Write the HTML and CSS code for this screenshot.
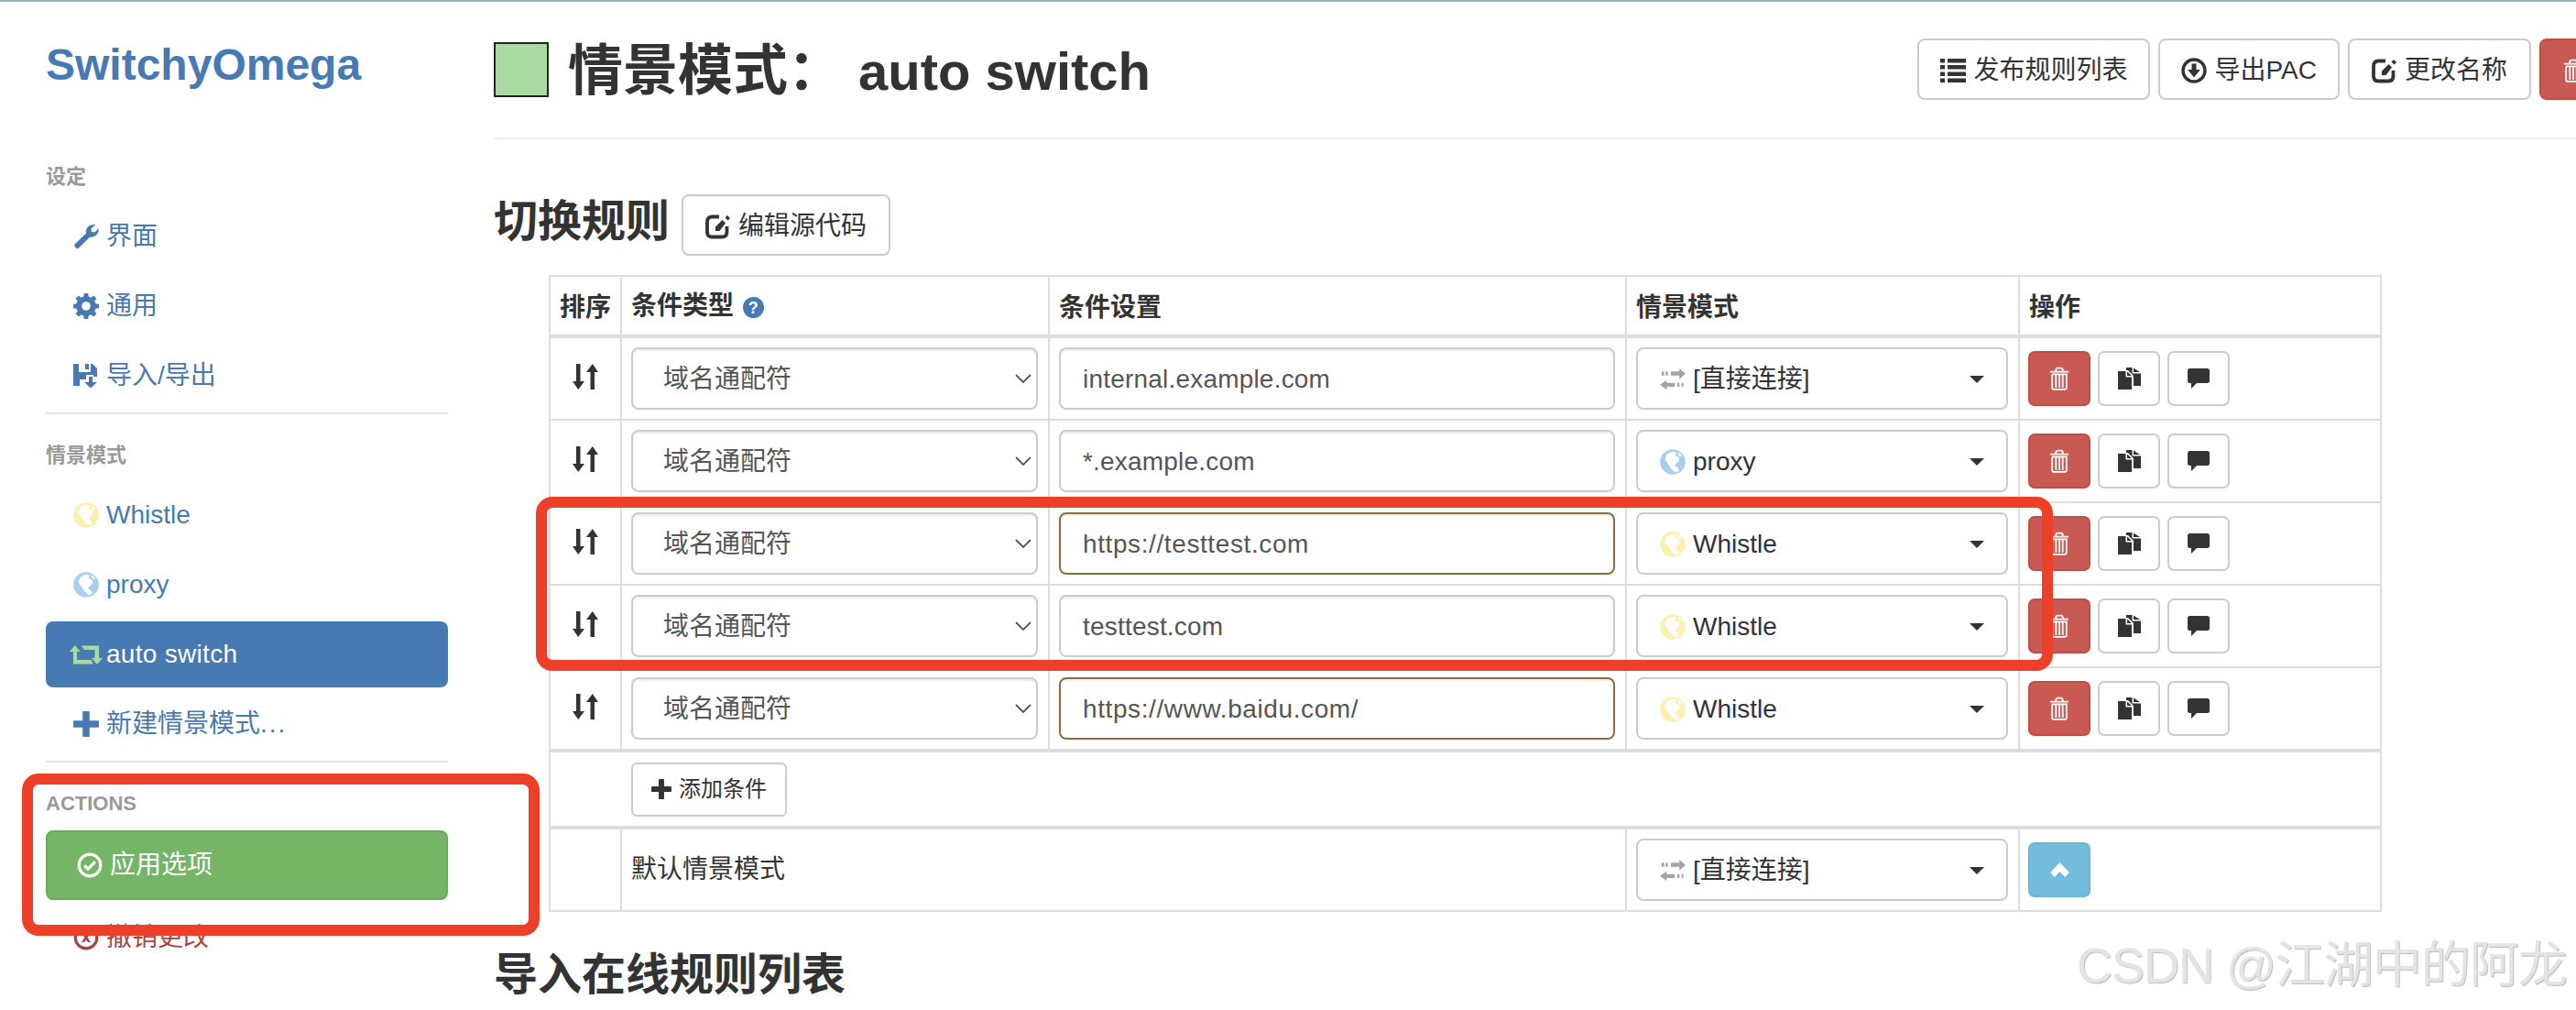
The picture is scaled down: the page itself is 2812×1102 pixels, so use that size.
FILE: index.html
```html
<!DOCTYPE html>
<html lang="zh-CN">
<head>
<meta charset="utf-8">
<title>SwitchyOmega</title>
<link rel="stylesheet" href="styles.css">
</head>
<body>
<svg class="sprite" aria-hidden="true">
  <symbol id="i-wrench" viewBox="0 0 28 28"><path d="M1.5 22.5 14 10.5C13 6 16 1.8 21 1.2L24.5 1 19.5 5.5 20 9l3.5.6L27.6 5C28.2 10.5 24.5 15 18 14.800L6 26.600Q4.500 27.800 3 26.400L1.600 25Q.6 23.600 1.500 22.500Z"/></symbol>
  <symbol id="i-cog" viewBox="0 0 28 28">
    <circle cx="14" cy="14" r="7.800" fill="none" stroke="currentColor" stroke-width="6"/>
    <g><rect x="11.500" y="0" width="5" height="28" rx="1"/><rect x="11.500" y="0" width="5" height="28" rx="1" transform="rotate(45 14 14)"/><rect x="11.500" y="0" width="5" height="28" rx="1" transform="rotate(90 14 14)"/><rect x="11.500" y="0" width="5" height="28" rx="1" transform="rotate(135 14 14)"/></g>
    <circle cx="14" cy="14" r="4.800" fill="#fff"/>
  </symbol>
  <symbol id="i-floppy" viewBox="0 0 28 28"><path d="M0 1H6V10H19V1H21L26 6V15H22V13H14V18H7V25H0Z"/><path d="M13 1H17V7H13Z"/><path d="M17 15H21V21H26L19 27.500 12 21H17Z"/></symbol>
  <symbol id="i-globe" viewBox="0 0 28 28"><circle cx="14" cy="14" r="13.800"/><path fill="#fff" d="M7 6.500C9.500 3.500 14 2 18 3.500L16.500 7 21 9 21 13 18 15.500 16 18 19 20 21 23.500 17 25.500 12 21 8.500 16 5.500 11.500Z"/><path fill="#fff" opacity=".8" d="M20.500 3 24.500 7 22 8.500 19.500 6Z"/></symbol>
  <symbol id="i-retweet" viewBox="0 0 36 21"><path d="M5.800 0 11.500 7H8V16H23L26 20.500H4V7H0Z"/><path d="M30 21 24 14H27.500V5H16L13 .5H32V14H36Z"/></symbol>
  <symbol id="i-plus" viewBox="0 0 26 26"><path d="M9.500 1Q9.500 0 10.500 0H15.500Q16.500 0 16.500 1V9.500H25Q26 9.500 26 10.500V15.500Q26 16.500 25 16.500H16.500V25Q16.500 26 15.500 26H10.500Q9.500 26 9.500 25V16.500H1Q0 16.500 0 15.500V10.500Q0 9.500 1 9.500H9.500Z"/></symbol>
  <symbol id="i-ok" viewBox="0 0 28 28"><circle cx="14" cy="14" r="11.800" fill="none" stroke="currentColor" stroke-width="3.200"/><path d="M12 20.500 7 15.500l2.400-2.400 2.600 2.600 6.600-6.600 2.400 2.400Z"/></symbol>
  <symbol id="i-undo" viewBox="0 0 28 28"><circle cx="14" cy="14" r="11.800" fill="none" stroke="currentColor" stroke-width="3.200"/><path d="M9 9h3l2 2.600L16 9h3l-3.400 5L19 19h-3l-2-2.600L12 19H9l3.400-5Z"/></symbol>
  <symbol id="i-list" viewBox="0 0 28 26"><path d="M0 0h5v4.500H0ZM8 0h20v4.500H8ZM0 7h5v4.500H0ZM8 7h20v4.500H8ZM0 14.500h5V19H0ZM8 14.500h20V19H8ZM0 21.500h5V26H0ZM8 21.500h20V26H8Z"/></symbol>
  <symbol id="i-download" viewBox="0 0 28 28"><circle cx="14" cy="14" r="12" fill="none" stroke="currentColor" stroke-width="3.400"/><path d="M11.500 6.500h5V13H21l-7 8.500L7 13h4.500Z"/></symbol>
  <symbol id="i-edit" viewBox="0 0 28 28"><path fill="none" stroke="currentColor" stroke-width="3.800" d="M15 3.500H7.500Q2 3.500 2 9V20Q2 25.500 7.500 25.500H18Q23.500 25.500 23.500 20V14"/><path d="M11 19V14.500L18.500 7 22 10.500 15.500 19ZM24 2l3 3-2.500 2.500-3-3Z"/></symbol>
  <symbol id="i-trash" viewBox="0 0 24 28"><path fill="none" stroke="currentColor" stroke-width="2" d="M1 6H23M8 6V3.500Q8 1.500 10 1.500H14Q16 1.500 16 3.500V6M3.500 9V25Q3.500 27 5.500 27H18.500Q20.500 27 20.500 25V9H3.500M8 10V25M12 10V25M16 10V25"/></symbol>
  <symbol id="i-sort" viewBox="0 0 28 28"><path d="M4 0H8.500V19H13L6.200 28 0 19H4Z"/><path d="M19.500 28H24V9H28L21.800 0 15 9H19.500Z"/></symbol>
  <symbol id="i-transfer" viewBox="0 0 28 24"><path d="M12 3.300H21.300V0L28 5.700 21.300 11.700V7.700H12ZM6.300 3.300H8.700V7.700H6.300ZM2 3.300H4.600V7.700H2Z"/><path d="M16.300 15.700H7.300V12.700L0 17.700 7.300 23.300V20H16.300ZM19 15.700H21.300V20H19ZM23.700 15.700H25.700V20H23.700Z"/></symbol>
  <symbol id="i-copy" viewBox="0 0 25 24"><path d="M0 4H8.500V10.500H15V24H0Z"/><path d="M10 4.500 15 9H10Z"/><path d="M9 0H15.500V6.500H25V20H17V9L11 3H9Z"/><path d="M17 .5 24 5H17Z"/></symbol>
  <symbol id="i-comment" viewBox="0 0 24 22"><path d="M2.500 0H21.500Q24 0 24 2.500V13.500Q24 16 21.500 16H10L4 22V16H2.500Q0 16 0 13.500V2.500Q0 0 2.500 0Z"/></symbol>
  <symbol id="i-chevron" viewBox="0 0 21 16"><path d="M10.500 0 21 11 16 16 10.500 10 5 16 0 11Z"/></symbol>
  <symbol id="i-select" viewBox="0 0 18 10"><path fill="none" stroke="currentColor" stroke-width="1.800" d="M1 1 9 9 17 1"/></symbol>
</svg>

<div class="page">
  <aside class="sidebar">
    <h1 class="logo">SwitchyOmega</h1>
    <h2 class="nav-head">设定</h2>
    <ul class="nav">
      <li><a class="pill"><svg class="ico"><use href="#i-wrench"/></svg>界面</a></li>
      <li><a class="pill"><svg class="ico"><use href="#i-cog"/></svg>通用</a></li>
      <li><a class="pill"><svg class="ico"><use href="#i-floppy"/></svg>导入/导出</a></li>
    </ul>
    <hr class="nav-rule">
    <h2 class="nav-head">情景模式</h2>
    <ul class="nav">
      <li><a class="pill"><svg class="ico whistle"><use href="#i-globe"/></svg>Whistle</a></li>
      <li><a class="pill"><svg class="ico proxy"><use href="#i-globe"/></svg>proxy</a></li>
      <li><a class="pill active"><svg class="ico wide"><use href="#i-retweet"/></svg><span class="active-name">auto switch</span></a></li>
      <li><a class="pill"><svg class="ico"><use href="#i-plus"/></svg><span>新建情景模式<span class="dots">...</span></span></a></li>
    </ul>
    <hr class="nav-rule">
    <h2 class="nav-head actions-head">ACTIONS</h2>
    <a class="apply"><svg class="ico"><use href="#i-ok"/></svg>应用选项</a>
    <a class="pill discard"><svg class="ico"><use href="#i-undo"/></svg>撤销更改</a>
  </aside>

  <main class="main">
    <header class="page-head">
      <div class="title-wrap">
        <span class="swatch"></span>
        <h1 class="title">情景模式：<span class="title-name">auto switch</span></h1>
      </div>
      <div class="head-actions">
        <button class="btn tight"><svg class="ico"><use href="#i-list"/></svg>发布规则列表</button>
        <button class="btn tight"><svg class="ico"><use href="#i-download"/></svg>导出PAC</button>
        <button class="btn"><svg class="ico"><use href="#i-edit"/></svg>更改名称</button>
        <button class="btn danger" aria-label="删除"><svg class="ico trash"><use href="#i-trash"/></svg></button>
      </div>
    </header>

    <div class="section-head">
      <h2 class="section-title">切换规则</h2>
      <button class="btn"><svg class="ico"><use href="#i-edit"/></svg>编辑源代码</button>
    </div>

    <table class="rules">
      <colgroup><col class="c-sort"><col class="c-type"><col class="c-cond"><col class="c-prof"><col class="c-act"></colgroup>
      <thead>
        <tr>
          <th class="th-sort">排序</th>
          <th class="th-type">条件类型 <span class="help">?</span></th>
          <th>条件设置</th>
          <th>情景模式</th>
          <th>操作</th>
        </tr>
      </thead>
      <tbody>
        <tr class="rule edge">
          <td class="sort"><svg class="ico"><use href="#i-sort"/></svg></td>
          <td><div class="select-wrap"><select class="field type"><option>域名通配符</option></select><svg class="sel-arrow"><use href="#i-select"/></svg></div></td>
          <td><input class="field text" value="internal.example.com"></td>
          <td><button class="field prof"><svg class="ico direct"><use href="#i-transfer"/></svg>[直接连接]<span class="caret"></span></button></td>
          <td class="acts"><button class="sq danger"><svg class="ico trash"><use href="#i-trash"/></svg></button><button class="sq"><svg class="ico copy"><use href="#i-copy"/></svg></button><button class="sq"><svg class="ico cmt"><use href="#i-comment"/></svg></button></td>
        </tr>
        <tr class="rule">
          <td class="sort"><svg class="ico"><use href="#i-sort"/></svg></td>
          <td><div class="select-wrap"><select class="field type"><option>域名通配符</option></select><svg class="sel-arrow"><use href="#i-select"/></svg></div></td>
          <td><input class="field text" value="*.example.com"></td>
          <td><button class="field prof"><svg class="ico proxy"><use href="#i-globe"/></svg>proxy<span class="caret"></span></button></td>
          <td class="acts"><button class="sq danger"><svg class="ico trash"><use href="#i-trash"/></svg></button><button class="sq"><svg class="ico copy"><use href="#i-copy"/></svg></button><button class="sq"><svg class="ico cmt"><use href="#i-comment"/></svg></button></td>
        </tr>
        <tr class="rule">
          <td class="sort"><svg class="ico"><use href="#i-sort"/></svg></td>
          <td><div class="select-wrap"><select class="field type"><option>域名通配符</option></select><svg class="sel-arrow"><use href="#i-select"/></svg></div></td>
          <td><input class="field text warn" value="https://testtest.com"></td>
          <td><button class="field prof"><svg class="ico whistle"><use href="#i-globe"/></svg>Whistle<span class="caret"></span></button></td>
          <td class="acts"><button class="sq danger"><svg class="ico trash"><use href="#i-trash"/></svg></button><button class="sq"><svg class="ico copy"><use href="#i-copy"/></svg></button><button class="sq"><svg class="ico cmt"><use href="#i-comment"/></svg></button></td>
        </tr>
        <tr class="rule">
          <td class="sort"><svg class="ico"><use href="#i-sort"/></svg></td>
          <td><div class="select-wrap"><select class="field type"><option>域名通配符</option></select><svg class="sel-arrow"><use href="#i-select"/></svg></div></td>
          <td><input class="field text" value="testtest.com"></td>
          <td><button class="field prof"><svg class="ico whistle"><use href="#i-globe"/></svg>Whistle<span class="caret"></span></button></td>
          <td class="acts"><button class="sq danger"><svg class="ico trash"><use href="#i-trash"/></svg></button><button class="sq"><svg class="ico copy"><use href="#i-copy"/></svg></button><button class="sq"><svg class="ico cmt"><use href="#i-comment"/></svg></button></td>
        </tr>
        <tr class="rule edge">
          <td class="sort"><svg class="ico"><use href="#i-sort"/></svg></td>
          <td><div class="select-wrap"><select class="field type"><option>域名通配符</option></select><svg class="sel-arrow"><use href="#i-select"/></svg></div></td>
          <td><input class="field text warn" value="https://www.baidu.com/"></td>
          <td><button class="field prof"><svg class="ico whistle"><use href="#i-globe"/></svg>Whistle<span class="caret"></span></button></td>
          <td class="acts"><button class="sq danger"><svg class="ico trash"><use href="#i-trash"/></svg></button><button class="sq"><svg class="ico copy"><use href="#i-copy"/></svg></button><button class="sq"><svg class="ico cmt"><use href="#i-comment"/></svg></button></td>
        </tr>
      </tbody>
      <tbody class="thick">
        <tr class="add-row">
          <td colspan="5"><button class="btn small"><svg class="ico add"><use href="#i-plus"/></svg>添加条件</button></td>
        </tr>
      </tbody>
      <tbody class="thick">
        <tr class="rule edge">
          <td></td>
          <td colspan="2">默认情景模式</td>
          <td><button class="field prof"><svg class="ico direct"><use href="#i-transfer"/></svg>[直接连接]<span class="caret"></span></button></td>
          <td class="acts"><button class="sq info"><svg class="ico chev"><use href="#i-chevron"/></svg></button></td>
        </tr>
      </tbody>
    </table>

    <h2 class="section-title online">导入在线规则列表</h2>
  </main>

  <div class="mark mark-rows"></div>
  <div class="mark mark-actions"></div>
  <div class="watermark">CSDN @江湖中的阿龙</div>
</div>
</body>
</html>
```

FILE: styles.css
```css
* { box-sizing: border-box; }
html, body { margin: 0; height: 100%; overflow: hidden; background: #fff; }
body {
  border-top: 2px solid #9ab5b9;
  font-family: "Liberation Sans", "Noto Sans CJK SC", sans-serif;
  font-size: 28px;
  line-height: 40px;
  color: #333;
}
h1, h2, ul { margin: 0; padding: 0; }
ul { list-style: none; }
.sprite { position: absolute; width: 0; height: 0; }
.ico { width: 28px; height: 28px; fill: currentColor; flex: none; }
.page { position: relative; display: flex; height: 1100px; overflow: hidden; }

/* sidebar */
.sidebar { width: 439px; margin-left: 50px; flex: none; }
.logo { margin: 38px 0 0; font-size: 48px; line-height: 62px; font-weight: 700; color: #4779b2; }
.nav-head { font-size: 22px; line-height: 30px; font-weight: 700; color: #999; margin: 0 0 14px; }
.logo + .nav-head { margin-top: 76px; }
.nav { display: flex; flex-direction: column; gap: 4px; }
.pill { display: flex; align-items: center; gap: 8px; height: 72px; padding: 0 30px; border-radius: 8px; color: #4779b2; }
.pill.active { background: #4779b2; color: #fff; }
.pill.active .ico { color: #a8dba0; }
.pill .wide { width: 36px; height: 21px; margin: 0 -4px 0 -4px; }
.active-name { letter-spacing: .3px; }
.dots { letter-spacing: 2px; }
.whistle { color: #fcf0b0; }
.proxy { color: #a8cef0; }
.nav-rule { border: 0; border-top: 2px solid #e5e5e5; margin: 4px 0 30px; }
.actions-head { margin-bottom: 14px; }
.apply { display: flex; align-items: center; gap: 8px; height: 76px; padding: 0 32px; border: 2px solid #6aa95c; border-radius: 8px; background: #74b566; color: #fff; }
.discard { color: #a94442; margin-top: 5px; }

/* main */
.main { flex: 1; min-width: 0; margin-left: 50px; padding-top: 40px; }
.page-head { display: flex; justify-content: space-between; align-items: flex-start; height: 110px; border-bottom: 2px solid #eee; }
.title-wrap { display: flex; align-items: center; gap: 21px; margin-top: 1px; }
.swatch { width: 60px; height: 60px; border: 2px solid #222; background: #a8dba0; flex: none; }
.title { font-size: 60px; line-height: 66px; font-weight: 700; position: relative; top: 2px; }
.title-name { margin-left: 17px; font-size: 58px; }
.head-actions { display: flex; gap: 9px; margin-right: -34px; }
.btn { display: inline-flex; align-items: center; gap: 8px; height: 67px; padding: 2px 24px 0; border: 2px solid #ccc; border-radius: 8px; background: #fff; color: #333; font: inherit; white-space: nowrap; }
.btn.tight { padding: 2px 23px 0; }
.btn.danger { background: #c95a53; border-color: #c04e46; color: #fff; }
.section-head { display: flex; align-items: center; gap: 13px; margin-top: 60px; }
.section-title { font-size: 48px; line-height: 56px; font-weight: 700; }
.section-head .section-title { margin-top: -7px; }

/* table */
.rules { width: 1999px; margin: 21px 0 0 60px; border-collapse: collapse; table-layout: fixed; }
.c-sort { width: 78px; }
.c-type { width: 467px; }
.c-cond { width: 630px; }
.c-prof { width: 429px; }
.c-act { width: 395px; }
.rules th, .rules td { border: 2px solid #ddd; padding: 0 11px 0 10px; vertical-align: middle; text-align: left; }
.rules th { height: 66px; padding-top: 5px; font-weight: 700; border-bottom-width: 4px; white-space: nowrap; }
.rules .th-sort { padding: 4px 0 0; text-align: center; }
.rules .th-type { padding-top: 0; }
.rule td { height: 90px; }
.rule.edge td { height: 91px; }
.thick td { border-top-width: 4px; }
.add-row td { height: 84px; }
.rules td.sort { padding: 0; text-align: center; }
.sort .ico { display: block; margin: -5px auto 0; }
.help { display: inline-flex; align-items: center; justify-content: center; width: 23px; height: 23px; margin-left: 2px; border-radius: 50%; background: #4779b2; color: #fff; font-size: 18px; line-height: 1; vertical-align: 1px; }

.field { display: block; width: 100%; height: 68px; border: 2px solid #ccc; border-radius: 8px; background: #fff; color: #555; font: inherit; margin: 0; box-shadow: inset 0 2px 2px rgba(0, 0, 0, .075); }
.select-wrap { position: relative; }
.type { appearance: none; padding: 1px 40px 0 33px; }
.sel-arrow { position: absolute; right: 7px; top: 29px; width: 18px; height: 10px; color: #555; }
.text { padding: 1px 24px 0; outline: 0; letter-spacing: .2px; }
.warn { border-color: #8a6d3b; letter-spacing: .6px; }
.prof { display: flex; align-items: center; gap: 8px; padding: 1px 24px 0; color: #333; box-shadow: none; text-align: left; }
.prof .ico { width: 28px; height: 28px; }
.direct { color: #a4a4a4; }
.caret { width: 0; height: 0; margin-left: auto; margin-right: 0; border-left: 8px solid transparent; border-right: 8px solid transparent; border-top: 8px solid #333; }

.rules td.acts { font-size: 0; line-height: 0; padding-left: 9px; }
.sq { display: inline-flex; align-items: center; justify-content: center; width: 68px; height: 60px; margin-right: 8px; padding: 0; border: 2px solid #ccc; border-radius: 7px; background: #fff; color: #333; vertical-align: middle; }
.sq.danger { background: #c95a53; border-color: #c04e46; color: #fff; }
.sq.info { background: #73bcdb; border-color: #6db6d6; color: #fff; }
.trash { width: 22px; height: 26px; }
.copy { width: 25px; height: 24px; }
.cmt { width: 24px; height: 22px; }
.chev { width: 21px; height: 16px; }
.small { height: 59px; padding: 0 20px; gap: 8px; font-size: 24px; margin-left: 78px; border-radius: 6px; }
.add { width: 22px; height: 22px; }

.online { margin: 41px 0 0; }

/* annotations over the screenshot */
.mark { position: absolute; border: 12px solid #ee4028; border-radius: 18px; }
.mark-rows { left: 585px; top: 540px; width: 1656px; height: 190px; }
.mark-actions { left: 24px; top: 842px; width: 565px; height: 177px; }
.watermark { position: absolute; left: 2267px; top: 1018px; font-size: 54px; line-height: 66px; letter-spacing: -1px; white-space: nowrap; color: #e4e4e4; text-shadow: 1px 1px 1px #bbb; }
```
